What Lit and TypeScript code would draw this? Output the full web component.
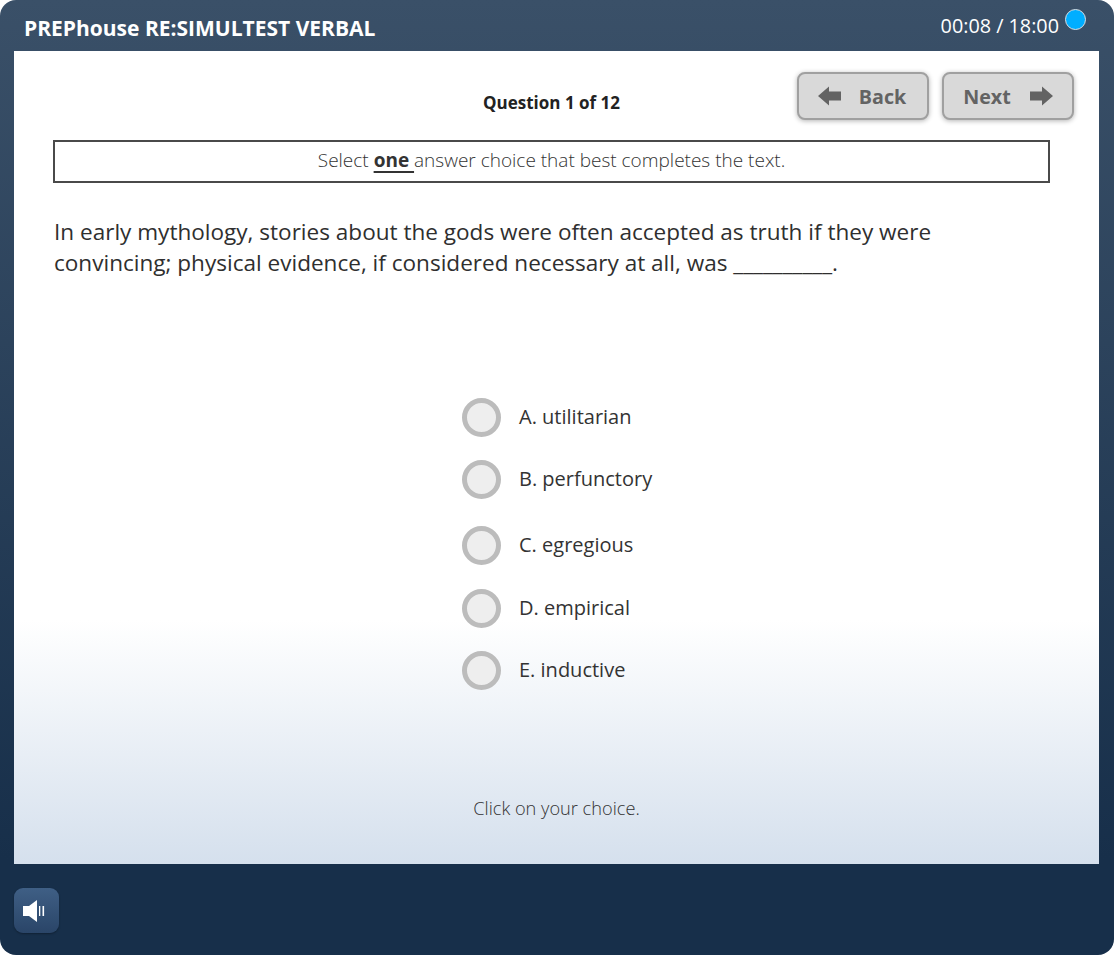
import { LitElement, html, css } from "lit";
import { customElement } from "lit/decorators.js";

const OPTIONS = [
  { text: "A. utilitarian", gap: 0 },
  { text: "B. perfunctory", gap: 22 },
  { text: "C. egregious", gap: 26 },
  { text: "D. empirical", gap: 23 },
  { text: "E. inductive", gap: 22 },
];

@customElement("app-root")
export class AppRoot extends LitElement {
  static styles = css`
    :host { display: block; width: 1114px; height: 955px; background: #fff; font-family: "Open Sans", sans-serif; }
    .shell {
      width: 1114px; height: 955px; box-sizing: border-box; border-radius: 16px; overflow: hidden;
      background: linear-gradient(180deg, #3a5068 0%, #172f4a 90%, #172f4a 100%);
      display: flex; flex-direction: column;
    }
    .top { height: 51px; flex: none; display: flex; justify-content: space-between; padding: 0 28px 0 24px; color: #fff; }
    .title { font-size: 21px; font-weight: 700; line-height: 57px; }
    .timer { display: flex; align-items: flex-start; font-size: 19.8px; line-height: 52px; }
    .clock { width: 21px; height: 21px; box-sizing: border-box; border-radius: 50%; background: #00aeff; border: 1.5px solid #d9dfe4; margin: 9px 0 0 6px; }
    .panel {
      flex: none; height: 813px; margin: 0 15px 0 14px; box-sizing: border-box;
      background: linear-gradient(180deg, #fff 0%, #fff 70%, #d5e0ed 100%);
      display: flex; flex-direction: column; color: #2e2e2e;
    }
    .head { height: 89px; flex: none; display: flex; padding: 21px 25px 0 40px; box-sizing: border-box; }
    .count { flex: 1; font-size: 17px; font-weight: 700; line-height: 22px; padding: 20px 0 0 429px; color: #222; }
    .btns { display: flex; gap: 13px; }
    .btn {
      width: 132px; height: 48px; box-sizing: border-box; border: 2px solid #a0a0a0; border-radius: 8px;
      background: #d9d9d9; box-shadow: 0 1px 5px rgba(0,0,0,.3); display: flex; align-items: center;
      justify-content: center; gap: 18px; color: #636363; font: 700 19.7px "Open Sans", sans-serif; padding: 0 2px 0 0;
    }
    .btn svg { width: 23px; height: 20px; display: block; }
    .btn.next { gap: 19px; padding: 0; }
    .instr {
      margin: 0 49px 0 39px; height: 43px; box-sizing: border-box; border: 2px solid #4a4a4a; flex: none;
      display: flex; align-items: center; justify-content: center; font-size: 19px; font-weight: 300; color: #333;
      white-space: pre; padding-bottom: 4px;
    }
    .instr b { font-weight: 700; text-decoration: underline; text-decoration-thickness: 2px; text-underline-offset: 4px; }
    .stem { margin: 33px 100px 0 40px; font-size: 22.55px; line-height: 31px; color: #2f2f2f; height: 117px; flex: none; }
    .opts { display: flex; flex-direction: column; margin: 63px 0 0 447.5px; flex: none; }
    .opt { display: flex; align-items: center; gap: 18.5px; height: 40px; font-size: 20px; color: #333; }
    .radio { width: 39px; height: 39px; margin-top: 2px; box-sizing: border-box; border-radius: 50%; background: #eee; border: 5px solid #bcbcbc; flex: none; }
    .hint { margin-top: 107px; text-align: center; font-size: 18.2px; font-weight: 300; color: #333; }
    .bottom { flex: 1; padding: 24px 0 0 14px; }
    .sound {
      width: 45px; height: 45px; box-sizing: border-box; padding-right: 5px; border-radius: 9px; background: linear-gradient(180deg, #3f5f85 0%, #2a4568 100%);
      box-shadow: 0 1px 2px rgba(0,0,0,.3); display: flex; align-items: center; justify-content: center;
    }
    .sound svg { width: 22px; height: 22px; display: block; }
  `;

  render() {
    return html`
      <div class="shell">
        <div class="top">
          <div class="title">PREPhouse RE:SIMULTEST VERBAL</div>
          <div class="timer">00:08 / 18:00<span class="clock"></span></div>
        </div>
        <div class="panel">
          <div class="head">
            <div class="count">Question 1 of 12</div>
            <div class="btns">
              <button class="btn">
                <svg viewBox="0 0 23 20"><path d="M0 10 L11 0.5 V5.5 H23 V14.5 H11 V19.5 Z" fill="#636363"/></svg>
                Back
              </button>
              <button class="btn next">
                Next
                <svg viewBox="0 0 23 20"><path d="M23 10 L12 0.5 V5.5 H0 V14.5 H12 V19.5 Z" fill="#636363"/></svg>
              </button>
            </div>
          </div>
          <div class="instr">Select <b>one </b>answer choice that best completes the text.</div>
          <div class="stem">In early mythology, stories about the gods were often accepted as truth if they were convincing; physical evidence, if considered necessary at all, was __________.</div>
          <div class="opts">
            ${OPTIONS.map(o => html`<div class="opt" style="margin-top:${o.gap}px"><span class="radio"></span>${o.text}</div>`)}
          </div>
          <div class="hint">Click on your choice.</div>
        </div>
        <div class="bottom">
          <div class="sound">
            <svg viewBox="0 0 22 22"><path d="M0 6 H6 L14 0 V22 L6 16 H0 Z" fill="#fff"/><rect x="16" y="6" width="1.3" height="10" fill="#fff"/><rect x="19.5" y="6" width="1.6" height="10" fill="#fff"/></svg>
          </div>
        </div>
      </div>
    `;
  }
}
